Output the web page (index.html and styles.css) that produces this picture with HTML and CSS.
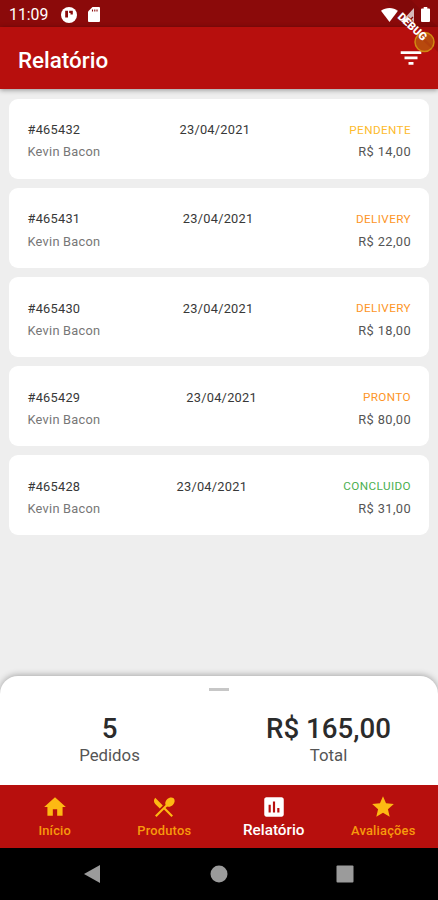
FILE: index.html
```html
<!DOCTYPE html>
<html lang="pt-BR">
<head>
<meta charset="utf-8">
<title>Relatório</title>
<link rel="stylesheet" href="styles.css">
</head>
<body>
<div class="phone">
  <div class="statusbar">
    <span class="clock">11:09</span>
    <svg class="s-app" viewBox="0 0 16 16"><circle cx="8" cy="8" r="8" fill="#fff"/><path d="M4.200 3.800H7v6.700H4.200zM8.200 3.800h3.600v3.600H9.500V6H8.200z" fill="#8b0a0a"/></svg>
    <svg class="s-sd" viewBox="0 0 12 15"><path d="M4.500 0H11a1 1 0 0 1 1 1v13a1 1 0 0 1-1 1H1a1 1 0 0 1-1-1V4.500z" fill="#fff"/><path d="M4.500 2.500v2M6.800 2.500v2M9 2.500v2" stroke="#8b0a0a" stroke-width="1.100"/></svg>
    <span class="spacer"></span>
    <svg class="s-wifi" viewBox="0 0 17 14"><path d="M0 2.800C5-.900 12-.900 17 2.800L8.500 14z" fill="#fff"/></svg>
    <svg class="s-cell" viewBox="0 0 13 14"><path d="M13 0v14H0z" fill="#fff"/><path d="M7 9l5 5M12 9l-5 5" stroke="#8b0a0a" stroke-width="1.300"/></svg>
    <svg class="s-bat" viewBox="0 0 9 15"><path d="M2.700 0h3.600v1.500H8a1 1 0 0 1 1 1V14a1 1 0 0 1-1 1H1a1 1 0 0 1-1-1V2.500a1 1 0 0 1 1-1h1.700z" fill="#fff"/></svg>
  </div>
  <header class="appbar">
    <h1>Relatório</h1>
    <svg class="filter" viewBox="0 0 24 24"><path d="M9.700 18.200h4.600v-2.600H9.700zM2.500 5.700v2.600h19V5.700zM6 13.200h12v-2.500H6z" fill="#fff"/></svg>
  </header>
  <svg class="debug" viewBox="0 0 64 64">
    <path d="M12 0H37L64 27V52z" fill="#6a0606" fill-opacity=".28"/>
    <circle cx="50.500" cy="42" r="9.500" fill="#b8500d" fill-opacity=".9" stroke="#d08a12" stroke-width="1.500"/>
    <path d="M46 34l14 14-1.500 1.500L44 36z" fill="#8e0b0b" fill-opacity=".15"/>
    <text x="38.500" y="30.500" transform="rotate(43 38.500 26.500)" text-anchor="middle">DEBUG</text>
  </svg>
  <main class="orders">
    <article class="card"><div class="row"><span class="id">#465432</span><span class="date">23/04/2021</span><span class="tag pending">PENDENTE</span></div><div class="row"><span class="name">Kevin Bacon</span><span class="price">R$ 14,00</span></div></article>
    <article class="card"><div class="row"><span class="id">#465431</span><span class="date">23/04/2021</span><span class="tag orange">DELIVERY</span></div><div class="row"><span class="name">Kevin Bacon</span><span class="price">R$ 22,00</span></div></article>
    <article class="card"><div class="row"><span class="id">#465430</span><span class="date">23/04/2021</span><span class="tag orange">DELIVERY</span></div><div class="row"><span class="name">Kevin Bacon</span><span class="price">R$ 18,00</span></div></article>
    <article class="card"><div class="row"><span class="id">#465429</span><span class="date">23/04/2021</span><span class="tag orange">PRONTO</span></div><div class="row"><span class="name">Kevin Bacon</span><span class="price">R$ 80,00</span></div></article>
    <article class="card"><div class="row"><span class="id">#465428</span><span class="date">23/04/2021</span><span class="tag done">CONCLUIDO</span></div><div class="row"><span class="name">Kevin Bacon</span><span class="price">R$ 31,00</span></div></article>
  </main>
  <section class="sheet">
    <div class="handle"></div>
    <div class="totals">
      <div class="total"><strong>5</strong><span>Pedidos</span></div>
      <div class="total"><strong>R$ 165,00</strong><span>Total</span></div>
    </div>
  </section>
  <nav class="tabs">
    <a class="tab"><svg viewBox="0 0 24 24"><path d="M10 20v-6h4v6h5v-8h3L12 3 2 12h3v8z"/></svg><span>Início</span></a>
    <a class="tab"><svg viewBox="0 0 24 24"><path d="M8.100 13.340l2.830-2.830L3.910 3.500c-1.560 1.560-1.560 4.090 0 5.660l4.190 4.180zm6.780-1.810c1.530.71 3.680.21 5.270-1.380 1.910-1.910 2.280-4.650.81-6.120-1.460-1.460-4.200-1.100-6.120.81-1.590 1.590-2.090 3.740-1.380 5.270L3.700 19.870l1.410 1.410L12 14.410l6.880 6.880 1.410-1.410L13.410 13l1.470-1.470z"/></svg><span>Produtos</span></a>
    <a class="tab active"><svg viewBox="0 0 24 24"><path d="M19 3H5c-1.100 0-2 .9-2 2v14c0 1.100.9 2 2 2h14c1.100 0 2-.9 2-2V5c0-1.100-.9-2-2-2zM9 17H7v-7h2v7zm4 0h-2V7h2v10zm4 0h-2v-4h2v4z"/></svg><span>Relatório</span></a>
    <a class="tab"><svg viewBox="0 0 24 24"><path d="M12 17.270L18.180 21l-1.640-7.030L22 9.240l-7.190-.61L12 2 9.190 8.630 2 9.240l5.460 4.730L5.820 21z"/></svg><span>Avaliações</span></a>
  </nav>
  <div class="sysnav">
    <svg viewBox="0 0 18 20"><path d="M17 1v18L1 10z"/></svg>
    <svg viewBox="0 0 18 20"><circle cx="9" cy="10" r="8.500"/></svg>
    <svg viewBox="0 0 18 20"><rect x=".5" y="1.500" width="17" height="17" rx="1"/></svg>
  </div>
</div>
</body>
</html>
```
FILE: styles.css
```css
* { box-sizing: border-box; }
body { margin: 0; font-family: Roboto, "Liberation Sans", sans-serif; background: #eee; }
.phone { position: relative; display: flex; flex-direction: column; width: 438px; height: 900px; overflow: hidden; background: #eee; }

.statusbar { display: flex; align-items: center; flex: none; height: 27px; padding: 2px 8px 0 9px; background: #8b0a0a; color: #fff; }
.clock { font-size: 15.800px; line-height: 24px; width: 52px; }
.s-app { width: 16px; height: 16px; }
.s-sd { width: 12px; height: 15px; margin-left: 11px; }
.spacer { flex: 1; }
.s-wifi { width: 17px; height: 14px; }
.s-cell { width: 13px; height: 14px; margin-left: 3px; }
.s-bat { position: relative; z-index: 2; width: 9px; height: 15px; margin-left: 7px; }

.appbar { position: relative; display: flex; align-items: center; justify-content: space-between; flex: none; height: 62px; padding: 3px 14px 0 18px; background: #b70f0d; color: #fff; box-shadow: 0 1px 5px rgba(0, 0, 0, .4); }
.appbar h1 { margin: 0; font-size: 22.400px; line-height: 26px; font-weight: 500; }
.filter { width: 26px; height: 26px; margin-top: -3px; }
.debug { position: absolute; top: 0; right: 0; width: 64px; height: 64px; }
.debug text { font: 900 11px Roboto, sans-serif; fill: #fff; }

.orders { display: flex; flex-direction: column; flex: 1; gap: 9.200px; padding: 9.500px 9px 0; }
.card { flex: none; height: 80px; padding: 20px 18px 0 18.500px; border-radius: 9px; background: #fff; }
.row { display: flex; justify-content: space-between; align-items: center; height: 22.300px; font-size: 12.800px; letter-spacing: .25px; }
.id, .date { color: #383838; }
.name { color: #777; }
.price { color: #555; letter-spacing: .4px; }
.tag { font-size: 11.700px; letter-spacing: .4px; }
.pending { color: #fdbb2d; }
.orange { color: #fd9527; }
.done { color: #4caf50; }

.sheet { display: flex; flex-direction: column; align-items: center; flex: none; height: 109px; border-radius: 18px 18px 0 0; background: #fff; box-shadow: 0 -1px 6px rgba(0, 0, 0, .3); }
.handle { width: 20px; height: 3px; margin-top: 12px; background: #c7c7c7; }
.totals { display: grid; grid-template-columns: 1fr 1fr; width: 100%; margin-top: 22px; }
.total { display: flex; flex-direction: column; align-items: center; }
.total strong { font-size: 27.700px; line-height: 32px; font-weight: 500; color: #2b2b2b; }
.total span { font-size: 16.800px; line-height: 20px; color: #555; }

.tabs { position: relative; display: grid; grid-template-columns: repeat(4, 1fr); flex: none; height: 63px; background: #b70f0d; }
.tab { display: flex; flex-direction: column; align-items: center; padding-top: 9px; color: #f79a0c; font-size: 12.900px; line-height: 18px; letter-spacing: .2px; font-weight: 500; }
.tab svg { width: 26px; height: 26px; fill: #fdb913; }
.tab span { margin-top: 2px; }
.tab.active { color: #fff; font-size: 15.300px; letter-spacing: 0; }
.tab.active svg { fill: #fff; }
.tab.active span { margin-top: 1px; }

.sysnav { display: flex; justify-content: space-between; flex: none; height: 52px; padding: 16px 84px 0 83px; background: #000; }
.sysnav svg { width: 18px; height: 20px; fill: #9b9b9b; }
```
